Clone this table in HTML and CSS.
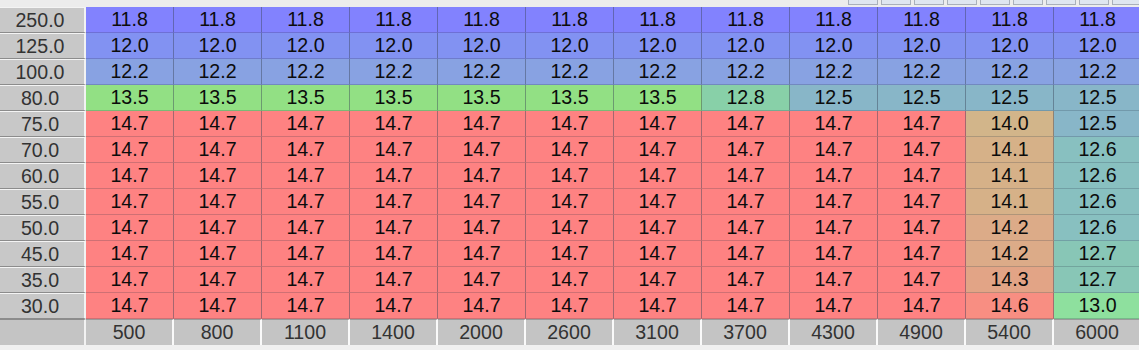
FILE: index.html
```html
<!DOCTYPE html>
<html>
<head>
<meta charset="utf-8">
<link rel="stylesheet" href="styles.css">
</head>
<body>
<div class="toolbar">
  <span class="tb"></span><span class="tb"></span><span class="tb"></span><span class="tb"></span><span class="tb"></span><span class="tb"></span><span class="tb"></span><span class="tb"></span><span class="tb"></span>
</div>
<div class="table">
  <div class="lbl">250.0</div>
  <div class="c c118">11.8</div><div class="c c118">11.8</div><div class="c c118">11.8</div><div class="c c118">11.8</div><div class="c c118">11.8</div><div class="c c118">11.8</div><div class="c c118">11.8</div><div class="c c118">11.8</div><div class="c c118">11.8</div><div class="c c118">11.8</div><div class="c c118">11.8</div><div class="c c118">11.8</div>
  <div class="lbl">125.0</div>
  <div class="c c120">12.0</div><div class="c c120">12.0</div><div class="c c120">12.0</div><div class="c c120">12.0</div><div class="c c120">12.0</div><div class="c c120">12.0</div><div class="c c120">12.0</div><div class="c c120">12.0</div><div class="c c120">12.0</div><div class="c c120">12.0</div><div class="c c120">12.0</div><div class="c c120">12.0</div>
  <div class="lbl">100.0</div>
  <div class="c c122">12.2</div><div class="c c122">12.2</div><div class="c c122">12.2</div><div class="c c122">12.2</div><div class="c c122">12.2</div><div class="c c122">12.2</div><div class="c c122">12.2</div><div class="c c122">12.2</div><div class="c c122">12.2</div><div class="c c122">12.2</div><div class="c c122">12.2</div><div class="c c122">12.2</div>
  <div class="lbl">80.0</div>
  <div class="c c135">13.5</div><div class="c c135">13.5</div><div class="c c135">13.5</div><div class="c c135">13.5</div><div class="c c135">13.5</div><div class="c c135">13.5</div><div class="c c135">13.5</div><div class="c c128">12.8</div><div class="c c125">12.5</div><div class="c c125">12.5</div><div class="c c125">12.5</div><div class="c c125">12.5</div>
  <div class="lbl">75.0</div>
  <div class="c c147">14.7</div><div class="c c147">14.7</div><div class="c c147">14.7</div><div class="c c147">14.7</div><div class="c c147">14.7</div><div class="c c147">14.7</div><div class="c c147">14.7</div><div class="c c147">14.7</div><div class="c c147">14.7</div><div class="c c147">14.7</div><div class="c c140">14.0</div><div class="c c125">12.5</div>
  <div class="lbl">70.0</div>
  <div class="c c147">14.7</div><div class="c c147">14.7</div><div class="c c147">14.7</div><div class="c c147">14.7</div><div class="c c147">14.7</div><div class="c c147">14.7</div><div class="c c147">14.7</div><div class="c c147">14.7</div><div class="c c147">14.7</div><div class="c c147">14.7</div><div class="c c141">14.1</div><div class="c c126">12.6</div>
  <div class="lbl">60.0</div>
  <div class="c c147">14.7</div><div class="c c147">14.7</div><div class="c c147">14.7</div><div class="c c147">14.7</div><div class="c c147">14.7</div><div class="c c147">14.7</div><div class="c c147">14.7</div><div class="c c147">14.7</div><div class="c c147">14.7</div><div class="c c147">14.7</div><div class="c c141">14.1</div><div class="c c126">12.6</div>
  <div class="lbl">55.0</div>
  <div class="c c147">14.7</div><div class="c c147">14.7</div><div class="c c147">14.7</div><div class="c c147">14.7</div><div class="c c147">14.7</div><div class="c c147">14.7</div><div class="c c147">14.7</div><div class="c c147">14.7</div><div class="c c147">14.7</div><div class="c c147">14.7</div><div class="c c141">14.1</div><div class="c c126">12.6</div>
  <div class="lbl">50.0</div>
  <div class="c c147">14.7</div><div class="c c147">14.7</div><div class="c c147">14.7</div><div class="c c147">14.7</div><div class="c c147">14.7</div><div class="c c147">14.7</div><div class="c c147">14.7</div><div class="c c147">14.7</div><div class="c c147">14.7</div><div class="c c147">14.7</div><div class="c c142">14.2</div><div class="c c126">12.6</div>
  <div class="lbl">45.0</div>
  <div class="c c147">14.7</div><div class="c c147">14.7</div><div class="c c147">14.7</div><div class="c c147">14.7</div><div class="c c147">14.7</div><div class="c c147">14.7</div><div class="c c147">14.7</div><div class="c c147">14.7</div><div class="c c147">14.7</div><div class="c c147">14.7</div><div class="c c142">14.2</div><div class="c c127">12.7</div>
  <div class="lbl">35.0</div>
  <div class="c c147">14.7</div><div class="c c147">14.7</div><div class="c c147">14.7</div><div class="c c147">14.7</div><div class="c c147">14.7</div><div class="c c147">14.7</div><div class="c c147">14.7</div><div class="c c147">14.7</div><div class="c c147">14.7</div><div class="c c147">14.7</div><div class="c c143">14.3</div><div class="c c127">12.7</div>
  <div class="lbl">30.0</div>
  <div class="c c147">14.7</div><div class="c c147">14.7</div><div class="c c147">14.7</div><div class="c c147">14.7</div><div class="c c147">14.7</div><div class="c c147">14.7</div><div class="c c147">14.7</div><div class="c c147">14.7</div><div class="c c147">14.7</div><div class="c c147">14.7</div><div class="c c146">14.6</div><div class="c c130">13.0</div>
  <div class="corner"></div>
  <div class="ax">500</div><div class="ax">800</div><div class="ax">1100</div><div class="ax">1400</div><div class="ax">2000</div><div class="ax">2600</div><div class="ax">3100</div><div class="ax">3700</div><div class="ax">4300</div><div class="ax">4900</div><div class="ax">5400</div><div class="ax">6000</div>
</div>
</body>
</html>
```
FILE: styles.css
```css
html, body {
  margin: 0;
  padding: 0;
  background: #f0f0f0;
  overflow: hidden;
  width: 1139px;
  height: 350px;
}

.toolbar {
  height: 7px;
  display: flex;
  gap: 3px;
  padding-left: 848px;
  background: #ececec;
  overflow: hidden;
  box-sizing: border-box;
}

.tb {
  flex: 0 0 30px;
  height: 5px;
  box-sizing: border-box;
  border: 1px solid #a9b0ba;
  border-top: none;
  background: #dfe6f0;
}

.table {
  display: grid;
  grid-template-columns: 86px repeat(12, 88px);
  grid-auto-rows: 26px;
  width: 1142px;
  font-family: "Liberation Sans", Arial, sans-serif;
  font-size: 19.6px;
}

.lbl, .corner {
  box-sizing: border-box;
  background: #c8c8c8;
  border-top: 1px solid #f4f4f4;
  border-bottom: 1px solid #8c8c8c;
  border-right: 2px solid #f2f2f2;
  color: #333;
  display: flex;
  align-items: center;
  justify-content: center;
  padding-right: 4px;
}

.corner {
  background: #c4c4c4;
  border-top: 1px solid #8c8c8c;
  border-bottom: none;
}

.c {
  box-sizing: border-box;
  display: flex;
  align-items: center;
  justify-content: center;
  color: #0c0c0c;
  border-right: 1px solid rgba(60, 70, 90, 0.45);
  border-bottom: 1px solid rgba(40, 50, 70, 0.22);
}

.ax {
  box-sizing: border-box;
  background: #c4c4c4;
  color: #333;
  display: flex;
  align-items: center;
  justify-content: center;
  border-right: 2px solid #fafafa;
  border-top: 1px solid #9a9a9a;
}

.c118 { background: #8282fe; }
.c120 { background: #8292f2; }
.c122 { background: #88a2e2; }
.c125 { background: #88b6c8; }
.c126 { background: #88c0c0; }
.c127 { background: #88c6b6; }
.c128 { background: #88d0a8; }
.c130 { background: #8ee09e; }
.c135 { background: #92e084; }
.c140 { background: #d2b58a; }
.c141 { background: #d6b188; }
.c142 { background: #dcab88; }
.c143 { background: #e2a486; }
.c146 { background: #f88e82; }
.c147 { background: #fe8282; }
```
